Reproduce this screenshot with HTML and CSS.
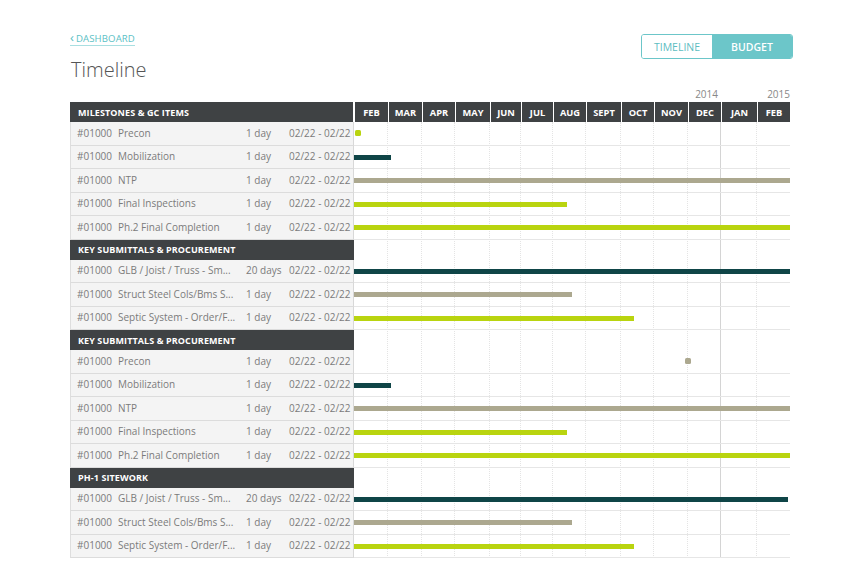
FILE: index.html
```html
<!DOCTYPE html>
<html lang="en">
<head>
<meta charset="utf-8">
<title>Timeline</title>
<link rel="stylesheet" href="styles.css">
</head>
<body>
<div class="page">
  <div class="top">
    <div class="heading">
      <a class="back" href="#"><span class="chev">&lsaquo;</span>DASHBOARD</a>
      <h1 class="title">Timeline</h1>
    </div>
    <div class="toggle">
      <span class="tab tab-off">TIMELINE</span>
      <span class="tab tab-on">BUDGET</span>
    </div>
  </div>

  <div class="years">
    <div class="years-spacer"></div>
    <div class="years-track">
      <span class="year y2014">2014</span>
      <span class="year y2015">2015</span>
    </div>
  </div>

  <div class="gantt">
    <div class="gridlines">
      <span class="gl"></span><span class="gl"></span><span class="gl"></span><span class="gl"></span><span class="gl"></span><span class="gl"></span><span class="gl"></span><span class="gl"></span><span class="gl"></span><span class="gl"></span><span class="gl year-line"></span><span class="gl"></span><span class="gl last"></span>
    </div>

    <div class="row head">
      <div class="cells sec">MILESTONES &amp; GC ITEMS</div>
      <div class="months">
        <span>FEB</span><span>MAR</span><span>APR</span><span>MAY</span><span>JUN</span><span>JUL</span><span>AUG</span><span>SEPT</span><span>OCT</span><span>NOV</span><span>DEC</span><span>JAN</span><span>FEB</span>
      </div>
    </div>

    <div class="row item"><div class="cells"><span class="code">#01000</span><span class="name">Precon</span><span class="dur">1 day</span><span class="date">02/22 - 02/22</span></div><div class="track"><i class="dot lime" style="left:1px"></i></div></div>
    <div class="row item"><div class="cells"><span class="code">#01000</span><span class="name">Mobilization</span><span class="dur">1 day</span><span class="date">02/22 - 02/22</span></div><div class="track"><i class="bar dark" style="width:37px"></i></div></div>
    <div class="row item"><div class="cells"><span class="code">#01000</span><span class="name">NTP</span><span class="dur">1 day</span><span class="date">02/22 - 02/22</span></div><div class="track"><i class="bar gray" style="width:436px"></i></div></div>
    <div class="row item"><div class="cells"><span class="code">#01000</span><span class="name">Final Inspections</span><span class="dur">1 day</span><span class="date">02/22 - 02/22</span></div><div class="track"><i class="bar lime" style="width:213px"></i></div></div>
    <div class="row item"><div class="cells"><span class="code">#01000</span><span class="name">Ph.2 Final Completion</span><span class="dur">1 day</span><span class="date">02/22 - 02/22</span></div><div class="track"><i class="bar lime" style="width:436px"></i></div></div>

    <div class="row section"><div class="cells sec">KEY SUBMITTALS &amp; PROCUREMENT</div><div class="track"></div></div>
    <div class="row item"><div class="cells"><span class="code">#01000</span><span class="name">GLB / Joist / Truss - Sm...</span><span class="dur">20 days</span><span class="date">02/22 - 02/22</span></div><div class="track"><i class="bar dark" style="width:436px"></i></div></div>
    <div class="row item"><div class="cells"><span class="code">#01000</span><span class="name">Struct Steel Cols/Bms S...</span><span class="dur">1 day</span><span class="date">02/22 - 02/22</span></div><div class="track"><i class="bar gray" style="width:218px"></i></div></div>
    <div class="row item"><div class="cells"><span class="code">#01000</span><span class="name">Septic System - Order/F...</span><span class="dur">1 day</span><span class="date">02/22 - 02/22</span></div><div class="track"><i class="bar lime" style="width:280px"></i></div></div>

    <div class="row section"><div class="cells sec">KEY SUBMITTALS &amp; PROCUREMENT</div><div class="track"></div></div>
    <div class="row item"><div class="cells"><span class="code">#01000</span><span class="name">Precon</span><span class="dur">1 day</span><span class="date">02/22 - 02/22</span></div><div class="track"><i class="dot gray" style="left:331px"></i></div></div>
    <div class="row item"><div class="cells"><span class="code">#01000</span><span class="name">Mobilization</span><span class="dur">1 day</span><span class="date">02/22 - 02/22</span></div><div class="track"><i class="bar dark" style="width:37px"></i></div></div>
    <div class="row item"><div class="cells"><span class="code">#01000</span><span class="name">NTP</span><span class="dur">1 day</span><span class="date">02/22 - 02/22</span></div><div class="track"><i class="bar gray" style="width:436px"></i></div></div>
    <div class="row item"><div class="cells"><span class="code">#01000</span><span class="name">Final Inspections</span><span class="dur">1 day</span><span class="date">02/22 - 02/22</span></div><div class="track"><i class="bar lime" style="width:213px"></i></div></div>
    <div class="row item"><div class="cells"><span class="code">#01000</span><span class="name">Ph.2 Final Completion</span><span class="dur">1 day</span><span class="date">02/22 - 02/22</span></div><div class="track"><i class="bar lime" style="width:436px"></i></div></div>

    <div class="row section"><div class="cells sec">PH-1 SITEWORK</div><div class="track"></div></div>
    <div class="row item"><div class="cells"><span class="code">#01000</span><span class="name">GLB / Joist / Truss - Sm...</span><span class="dur">20 days</span><span class="date">02/22 - 02/22</span></div><div class="track"><i class="bar dark" style="width:434px"></i></div></div>
    <div class="row item"><div class="cells"><span class="code">#01000</span><span class="name">Struct Steel Cols/Bms S...</span><span class="dur">1 day</span><span class="date">02/22 - 02/22</span></div><div class="track"><i class="bar gray" style="width:218px"></i></div></div>
    <div class="row item"><div class="cells"><span class="code">#01000</span><span class="name">Septic System - Order/F...</span><span class="dur">1 day</span><span class="date">02/22 - 02/22</span></div><div class="track"><i class="bar lime" style="width:280px"></i></div></div>
  </div>
</div>
</body>
</html>
```

FILE: styles.css
```css
* { box-sizing: border-box; }
html, body { margin: 0; padding: 0; background: #fff; }
body {
  font-family: "Open Sans", "Noto Sans", "Liberation Sans", sans-serif;
  color: #777;
  width: 864px;
  height: 577px;
  overflow: hidden;
}
.page { padding: 32px 0 0 70px; width: 864px; }

.top { display: flex; justify-content: space-between; width: 723px; }
.heading { display: flex; flex-direction: column; }
.back {
  color: #5cc1c5;
  font-size: 9.6px;
  text-decoration: none;
  border-bottom: 1px solid #a9dfe1;
  line-height: 12px;
  align-self: flex-start;
  letter-spacing: 0.1px;
}
.chev { font-size: 13px; margin-right: 2px; line-height: 10px; }
.title {
  margin: 10px 0 0 1px;
  font-size: 20px;
  font-weight: 300;
  color: #555;
  line-height: 28px;
}
.toggle {
  display: flex;
  height: 25px;
  margin-top: 2px;
  border: 1px solid #6cc6c9;
  border-radius: 3px;
  overflow: hidden;
}
.tab {
  display: flex; align-items: center; justify-content: center;
  font-size: 10.5px;
}
.tab-off { width: 70px; color: #5cbdc1; background: #fff; }
.tab-on { width: 80px; color: #fff; background: #6cc6c9; font-weight: 600; }

.years { display: flex; height: 17px; margin-top: 1px; }
.years-spacer { width: 284px; }
.years-track { position: relative; width: 436px; font-size: 10px; color: #888; }
.year { position: absolute; top: 3px; line-height: 12px; }
.y2014 { right: 72px; }
.y2015 { right: 0; }

.gantt { position: relative; width: 720px; }
.gridlines {
  position: absolute; top: 20px; bottom: 0; left: 284px; width: 436px;
  display: grid;
  grid-template-columns: 34px 34px 33px 35px 31px 32px 33px 35px 33px 34px 33px 36px 33px;
}
.gl { border-right: 1px dotted #e4e4e4; }
.gl.year-line { border-right: 1px solid #d4d4d4; }
.gl.last { border-right: 0; }

.row { display: flex; position: relative; }
.cells {
  width: 284px;
  flex: none;
  display: flex;
  align-items: center;
  background: #f4f4f4;
  border-left: 1px solid #dedede;
  border-right: 1px solid #d8d8d8;
  font-size: 10px;
  color: #7b7b7b;
  white-space: nowrap;
}
.track { position: relative; width: 436px; flex: none; }

.head { height: 20px; }
.head .cells { border: 0; margin-right: 1px; width: 283px; }
.sec {
  background: #3f4244;
  color: #fff;
  font-weight: 700;
  font-size: 9px;
  padding-left: 8px;
  letter-spacing: 0.1px;
}
.months {
  display: grid;
  width: 436px;
  grid-template-columns: 34px 34px 33px 35px 31px 32px 33px 35px 33px 34px 33px 36px 33px;
}
.months span {
  background: #3f4244;
  color: #fff;
  font-weight: 700;
  font-size: 9.3px;
  display: flex; align-items: center; justify-content: center;
  margin-left: 1px;
}

.item { height: 23.5px; }
.item .cells { border-bottom: 1px solid #dcdcdc; padding-bottom: 1px; }
.item .track { border-bottom: 1px solid #e6e6e6; }
.section { height: 20px; }
.section .cells { border: 0; }

.code { width: 41px; padding-left: 6px; flex: none; box-sizing: content-box; }
.name { width: 128px; flex: none; }
.dur { width: 43px; flex: none; }
.date { flex: none; }

.bar {
  position: absolute; left: 0; top: 9px; height: 5px;
}
.dot { position: absolute; top: 8px; width: 6px; height: 6px; border-radius: 1.5px; }
.lime { background: #b9d40f; }
.dark { background: #0f4547; }
.gray { background: #aca88f; }
```
